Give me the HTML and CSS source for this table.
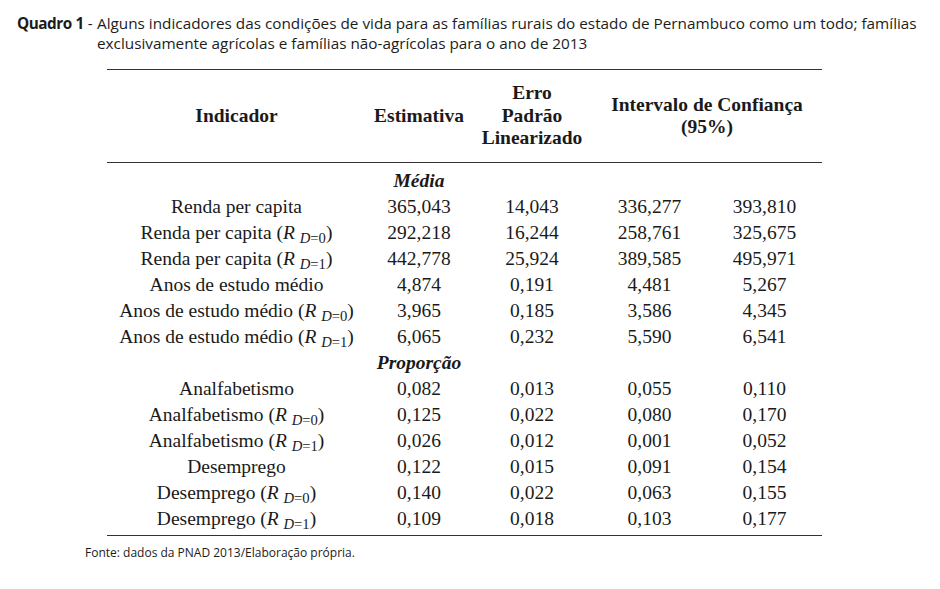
FILE: index.html
```html
<!DOCTYPE html>
<html lang="pt">
<head>
<meta charset="utf-8">
<title>Quadro 1</title>
<link rel="stylesheet" href="styles.css">
</head>
<body>
<div class="page">
  <div class="caption">
    <span class="label"><b>Quadro 1</b> -</span>
    <p class="caption-text">Alguns indicadores das condições de vida para as famílias rurais do estado de Pernambuco como um todo; famílias exclusivamente agrícolas e famílias não-agrícolas para o ano de 2013</p>
  </div>

  <table class="data">
    <colgroup>
      <col class="c-ind"><col class="c-est"><col class="c-err"><col class="c-lo"><col class="c-hi">
    </colgroup>
    <thead>
      <tr>
        <th>Indicador</th>
        <th>Estimativa</th>
        <th>Erro<br>Padrão<br>Linearizado</th>
        <th colspan="2" class="ic">Intervalo de Confiança<br>(95%)</th>
      </tr>
    </thead>
    <tbody>
      <tr class="first"><td></td><td class="section">Média</td><td></td><td></td><td></td></tr>
      <tr><td>Renda per capita</td><td>365,043</td><td>14,043</td><td>336,277</td><td>393,810</td></tr>
      <tr><td>Renda per capita (<i>R</i> <sub><i>D</i>=0</sub>)</td><td>292,218</td><td>16,244</td><td>258,761</td><td>325,675</td></tr>
      <tr><td>Renda per capita (<i>R</i> <sub><i>D</i>=1</sub>)</td><td>442,778</td><td>25,924</td><td>389,585</td><td>495,971</td></tr>
      <tr><td>Anos de estudo médio</td><td>4,874</td><td>0,191</td><td>4,481</td><td>5,267</td></tr>
      <tr><td>Anos de estudo médio (<i>R</i> <sub><i>D</i>=0</sub>)</td><td>3,965</td><td>0,185</td><td>3,586</td><td>4,345</td></tr>
      <tr><td>Anos de estudo médio (<i>R</i> <sub><i>D</i>=1</sub>)</td><td>6,065</td><td>0,232</td><td>5,590</td><td>6,541</td></tr>
      <tr><td></td><td class="section">Proporção</td><td></td><td></td><td></td></tr>
      <tr><td>Analfabetismo</td><td>0,082</td><td>0,013</td><td>0,055</td><td>0,110</td></tr>
      <tr><td>Analfabetismo (<i>R</i> <sub><i>D</i>=0</sub>)</td><td>0,125</td><td>0,022</td><td>0,080</td><td>0,170</td></tr>
      <tr><td>Analfabetismo (<i>R</i> <sub><i>D</i>=1</sub>)</td><td>0,026</td><td>0,012</td><td>0,001</td><td>0,052</td></tr>
      <tr><td>Desemprego</td><td>0,122</td><td>0,015</td><td>0,091</td><td>0,154</td></tr>
      <tr><td>Desemprego (<i>R</i> <sub><i>D</i>=0</sub>)</td><td>0,140</td><td>0,022</td><td>0,063</td><td>0,155</td></tr>
      <tr class="last"><td>Desemprego (<i>R</i> <sub><i>D</i>=1</sub>)</td><td>0,109</td><td>0,018</td><td>0,103</td><td>0,177</td></tr>
    </tbody>
  </table>

  <p class="source">Fonte: dados da PNAD 2013/Elaboração própria.</p>
</div>
</body>
</html>
```

FILE: styles.css
```css
* { box-sizing: border-box; }

html, body {
  margin: 0;
  padding: 0;
  background: #ffffff;
}

.page {
  width: 940px;
  height: 589px;
  padding: 14px 0 0 17px;
  overflow: hidden;
}

.caption {
  display: flex;
  font-family: "Open Sans", "Noto Sans", sans-serif;
  font-size: 15.3px;
  line-height: 19.5px;
  color: #1c1c1c;
}

.caption .label {
  flex: 0 0 80px;
  white-space: nowrap;
}

.caption .label b {
  font-weight: 700;
  letter-spacing: -0.45px;
}

.caption-text {
  margin: 0;
  width: 835px;
}

.data {
  margin: 16px 0 0 90px;
  width: 715px;
  table-layout: fixed;
  border-collapse: collapse;
  font-family: "Liberation Serif", "Times New Roman", serif;
  font-size: 19.5px;
  color: #1a1a1a;
  border-top: 1.5px solid #333;
  border-bottom: 1.5px solid #333;
}

.c-ind { width: 259px; }
.c-est { width: 106px; }
.c-err { width: 120px; }
.c-lo  { width: 115px; }
.c-hi  { width: 115px; }

.data thead th {
  height: 93px;
  font-weight: 700;
  line-height: 22.5px;
  text-align: center;
  vertical-align: middle;
  padding: 0;
  border-bottom: 1.5px solid #333;
}

.data tbody td {
  padding: 0;
  line-height: 26px;
  height: 26px;
  text-align: center;
  white-space: nowrap;
}

.data tbody tr.first td {
  padding-top: 5px;
  height: 31px;
}

.data tbody tr.last td {
  padding-bottom: 3px;
  height: 29px;
}

.data td.section {
  font-weight: 700;
  font-style: italic;
}

.data sub {
  font-size: 0.75em;
  line-height: 0;
  vertical-align: -0.3em;
}

.source {
  margin: 8px 0 0 68px;
  font-family: "Open Sans", "Noto Sans", sans-serif;
  font-size: 12px;
  color: #1c1c1c;
}
```
